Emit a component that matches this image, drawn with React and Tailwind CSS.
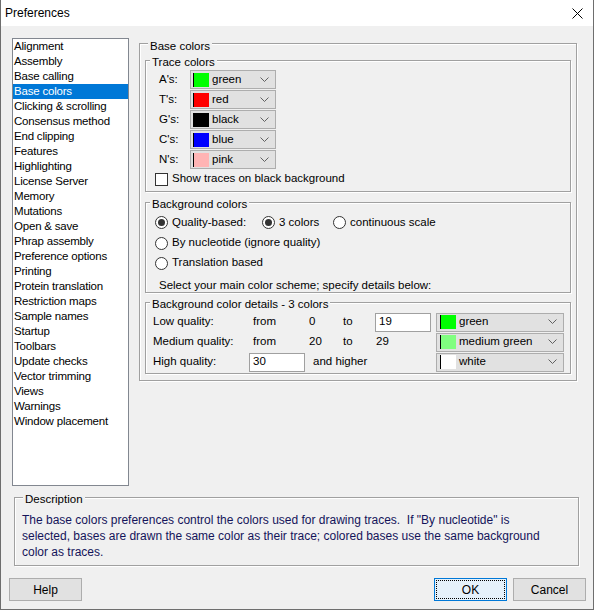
import React from 'react';

const ui = "font-['Liberation_Sans',Arial,sans-serif]";

const pages = [
  'Alignment', 'Assembly', 'Base calling', 'Base colors', 'Clicking & scrolling',
  'Consensus method', 'End clipping', 'Features', 'Highlighting', 'License Server',
  'Memory', 'Mutations', 'Open & save', 'Phrap assembly', 'Preference options',
  'Printing', 'Protein translation', 'Restriction maps', 'Sample names', 'Startup',
  'Toolbars', 'Update checks', 'Vector trimming', 'Views', 'Warnings', 'Window placement',
];

const traces = [
  { label: "A's:", name: 'green', color: '#00ff00' },
  { label: "T's:", name: 'red', color: '#ff0000' },
  { label: "G's:", name: 'black', color: '#000000' },
  { label: "C's:", name: 'blue', color: '#0000ff' },
  { label: "N's:", name: 'pink', color: '#ffb4b4' },
];

const Chevron = () => (
  <svg width="9" height="6" viewBox="0 0 9 6" className="shrink-0">
    <path d="M0.5 0.5 L4.5 4.5 L8.5 0.5" fill="none" stroke="#606060" strokeWidth="1" />
  </svg>
);

const ColorCombo = ({ name, color, width, pl = 'pl-[2px]' }) => (
  <div
    className={`h-[19px] flex items-center bg-[#e1e1e1] border border-[#adadad] ${pl} pr-[6px]`}
    style={{ width }}
  >
    <div className="w-[16px] h-[14px] border-l border-black shrink-0" style={{ backgroundColor: color }} />
    <span className="ml-[3px] flex-1 leading-none">{name}</span>
    <Chevron />
  </div>
);

const Group = ({ label, className = '', labelClass = '-top-[6px] left-[4px]', children }) => (
  <div className={`relative border border-[#a0a0a0] shadow-[1px_1px_0_#fff,inset_1px_1px_0_#fff] ${className}`}>
    <span className={`absolute ${labelClass} px-[2px] leading-[14px] bg-[#f0f0f0]`}>{label}</span>
    {children}
  </div>
);

const Radio = ({ checked }) => (
  <div className="w-[13px] h-[13px] rounded-full border border-[#333] bg-white flex items-center justify-center shrink-0">
    {checked && <div className="w-[7px] h-[7px] rounded-full bg-[#333]" />}
  </div>
);

const TextBox = ({ value, width }) => (
  <div className="h-[19px] bg-white border border-[#a0a0a0] pl-[3px] flex items-center" style={{ width }}>
    {value}
  </div>
);

export default function App() {
  return (
    <div className={`w-[594px] h-[610px] bg-[#f0f0f0] flex flex-col border-l border-r border-b border-[#6e6e6e] text-black overflow-hidden ${ui}`}>
      <div className="h-[26px] bg-white flex items-center justify-between pl-[4px] pr-[10px] shrink-0">
        <span className="text-[12px]">Preferences</span>
        <svg width="11" height="11" viewBox="0 0 11 11">
          <path d="M0.5 0.5 L10.5 10.5 M10.5 0.5 L0.5 10.5" stroke="#000" strokeWidth="1" />
        </svg>
      </div>

      <div className="flex pl-[11px] pt-[12px] text-[11.5px]">
        <div className="w-[117px] h-[448px] bg-white border border-[#828790] flex flex-col shrink-0 tracking-[-0.2px]">
          {pages.map((p) => (
            <div
              key={p}
              className={`h-[15px] leading-[15px] pl-[1px] whitespace-nowrap ${p === 'Base colors' ? 'bg-[#0078d7] text-white' : ''}`}
            >
              {p}
            </div>
          ))}
        </div>

        <Group label="Base colors" labelClass="-top-[5px] left-[8px]" className="ml-[10px] mt-[5px] w-[438px] h-[338px] px-[5px] pt-[16px]">
          <Group label="Trace colors" className="h-[132px] pl-[13px] pt-[9px]">
            {traces.map((t) => (
              <div key={t.label} className="h-[20px] flex items-start">
                <span className="w-[31px] leading-[19px]">{t.label}</span>
                <ColorCombo name={t.name} color={t.color} width={86} />
              </div>
            ))}
            <div className="flex items-center h-[16px] mt-[1px] -ml-[4px]">
              <div className="w-[13px] h-[13px] border border-[#333] bg-white shrink-0" />
              <span className="ml-[4px]">Show traces on black background</span>
            </div>
          </Group>

          <Group label="Background colors" className="mt-[10px] h-[91px] pl-[9px] pt-[9px]">
            <div className="flex items-center h-[21px]">
              <div className="flex items-center gap-[4px] w-[107px]">
                <Radio checked />
                <span>Quality-based:</span>
              </div>
              <div className="flex items-center gap-[4px] w-[71px]">
                <Radio checked />
                <span>3 colors</span>
              </div>
              <div className="flex items-center gap-[4px]">
                <Radio />
                <span>continuous scale</span>
              </div>
            </div>
            <div className="flex items-center gap-[4px] h-[20px]">
              <Radio />
              <span>By nucleotide (ignore quality)</span>
            </div>
            <div className="flex items-center gap-[4px] h-[20px]">
              <Radio />
              <span>Translation based</span>
            </div>
            <div className="pl-[4px] mt-[5px] leading-[14px]">Select your main color scheme; specify details below:</div>
          </Group>

          <Group label="Background color details - 3 colors" className="mt-[9px] h-[72px] pl-[7px] pr-[6px] pt-[9px]">
            <div className="flex items-center h-[20px]">
              <span className="w-[100px]">Low quality:</span>
              <span className="w-[56px]">from</span>
              <span className="w-[34px]">0</span>
              <span className="w-[32px]">to</span>
              <TextBox value="19" width={56} />
              <div className="ml-auto">
                <ColorCombo name="green" color="#00ff00" width={128} pl="pl-[3px]" />
              </div>
            </div>
            <div className="flex items-center h-[20px]">
              <span className="w-[100px]">Medium quality:</span>
              <span className="w-[56px]">from</span>
              <span className="w-[34px]">20</span>
              <span className="w-[32px]">to</span>
              <span className="pl-[1px]">29</span>
              <div className="ml-auto">
                <ColorCombo name="medium green" color="#80ff80" width={128} pl="pl-[3px]" />
              </div>
            </div>
            <div className="flex items-center h-[20px]">
              <span className="w-[96px]">High quality:</span>
              <TextBox value="30" width={56} />
              <span className="ml-[8px]">and higher</span>
              <div className="ml-auto">
                <ColorCombo name="white" color="#ffffff" width={128} pl="pl-[3px]" />
              </div>
            </div>
          </Group>
        </Group>
      </div>

      <div className="pl-[13px] pr-[14px] mt-[11px]">
        <Group
          label={<span className="text-[11.5px]">Description</span>}
          labelClass="-top-[7px] left-[8px]"
          className="h-[69px] pl-[7px] pt-[14px]"
        >
          <p className="text-[12px] leading-[16px] text-[#14145a] whitespace-pre">
            {'The base colors preferences control the colors used for drawing traces.  If "By nucleotide" is\nselected, bases are drawn the same color as their trace; colored bases use the same background\ncolor as traces.'}
          </p>
        </Group>
      </div>

      <div className="flex items-center mt-[12px] pl-[8px] pr-[7px] text-[12px]">
        <button className="w-[73px] h-[23px] bg-[#e1e1e1] border border-[#adadad]">Help</button>
        <button className="ml-auto w-[73px] h-[23px] bg-[#e5f1fb] border border-[#0078d7] p-[1px]">
          <div className="w-full h-full border border-dotted border-black flex items-center justify-center">OK</div>
        </button>
        <button className="ml-[6px] w-[73px] h-[23px] bg-[#e1e1e1] border border-[#adadad]">Cancel</button>
      </div>
    </div>
  );
}
